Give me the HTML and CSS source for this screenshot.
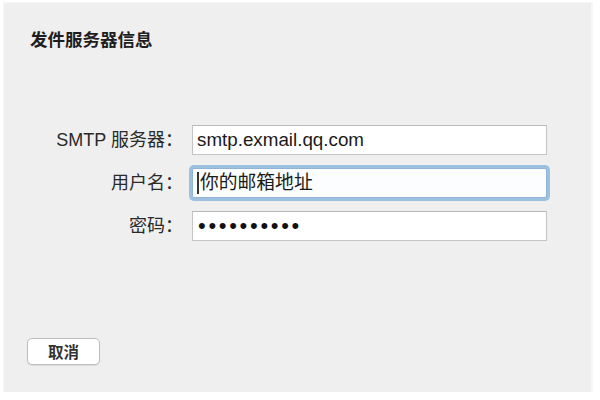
FILE: index.html
```html
<!DOCTYPE html>
<html lang="zh-CN">
<head>
<meta charset="utf-8">
<title>发件服务器信息</title>
<link rel="stylesheet" href="styles.css">
</head>
<body>
<div class="panel">
  <h1 class="title">发件服务器信息</h1>
  <div class="form">
    <label class="label">SMTP 服务器：</label>
    <div class="field">smtp.exmail.qq.com</div>
    <label class="label">用户名：</label>
    <div class="field focused"><span class="caret"></span>你的邮箱地址</div>
    <label class="label">密码：</label>
    <div class="field"><span class="dots">••••••••••</span></div>
  </div>
  <div class="actions">
    <button class="btn">取消</button>
  </div>
</div>
</body>
</html>
```

FILE: styles.css
```css
html, body {
  margin: 0;
  padding: 0;
}
body {
  width: 600px;
  height: 400px;
  background: #ffffff;
  font-family: "Liberation Sans", "Noto Sans CJK SC", sans-serif;
  color: #222222;
  overflow: hidden;
}
.panel {
  box-sizing: border-box;
  width: 590px;
  height: 390px;
  margin: 2px 0 0 3px;
  background: #efefef;
  border-top: 1px solid #f7f7f7;
  border-left: 1px solid #f8f8f8;
  border-right: 2px solid #f7f7f7;
  display: flex;
  flex-direction: column;
}
.title {
  margin: 24px 0 0 26px;
  font-size: 17.5px;
  font-weight: bold;
  line-height: 24px;
  color: #1e1e1e;
  font-family: "Noto Sans CJK SC", sans-serif;
}
.form {
  margin-top: 74px;
  display: grid;
  grid-template-columns: 179px 355px;
  column-gap: 9px;
  row-gap: 13px;
  align-items: center;
}
.label {
  text-align: right;
  font-size: 18px;
  line-height: 30px;
  color: #2a2a2a;
  white-space: nowrap;
}
.field {
  box-sizing: border-box;
  height: 30px;
  background: #ffffff;
  border: 1px solid #c4c4c4;
  border-top-color: #b8b8b8;
  padding: 0 4px;
  font-size: 18.8px;
  line-height: 28px;
  color: #1a1a1a;
  display: flex;
  align-items: center;
  white-space: nowrap;
}
.focused {
  border-color: #8fb4d6;
  box-shadow: 0 0 0 3px #9cc0e0;
  border-radius: 2px;
  background: #fbfdff;
}
.caret {
  display: inline-block;
  width: 2px;
  height: 22px;
  background: #333;
  margin-right: 1px;
}
.dots {
  font-size: 22px;
  letter-spacing: 2.7px;
  color: #111;
  padding-left: 1px;
}
.actions {
  margin-top: auto;
  margin-bottom: 27px;
  padding-left: 23px;
  display: flex;
}
.btn {
  box-sizing: border-box;
  width: 73px;
  height: 27px;
  background: #ffffff;
  border: 1px solid #bdbdbd;
  border-radius: 5px;
  font-family: "Noto Sans CJK SC", sans-serif;
  font-size: 15.5px;
  font-weight: bold;
  color: #333333;
  padding: 0;
  line-height: 25px;
  box-shadow: 0 1px 1px rgba(0,0,0,0.08);
}
```
